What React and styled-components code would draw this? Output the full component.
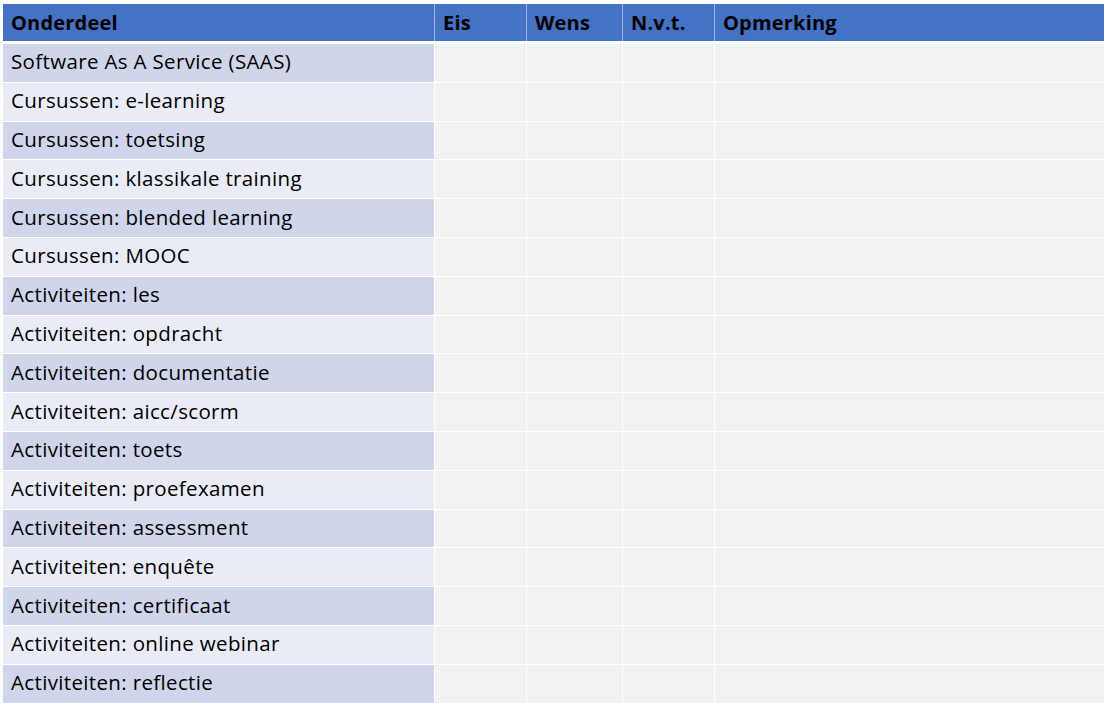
import React from 'react';
import styled, { createGlobalStyle } from 'styled-components';

const GlobalStyle = createGlobalStyle`
  html, body {
    margin: 0;
    padding: 0;
    background: #ffffff;
  }
  body {
    font-family: "Open Sans", Lato, "Liberation Sans", sans-serif;
  }
`;

const columns = '431px 91px 95px 91px 389px';

const Page = styled.div`
  padding: 4px 0 0 3px;
  width: 1108px;
  height: 713px;
  box-sizing: border-box;
`;

const Table = styled.div`
  display: flex;
  flex-direction: column;
  gap: 1px;
  width: 1101px;
  background: #ffffff;
`;

const HeaderRow = styled.div`
  display: grid;
  grid-template-columns: ${columns};
  gap: 1px;
  background: #9fb6e2;
  height: 37px;
  margin-bottom: 2px;
`;

const HeaderCell = styled.div`
  background: #4472c4;
  color: #000000;
  font-weight: 700;
  font-size: 20px;
  letter-spacing: 0.2px;
  display: flex;
  align-items: center;
  padding: 0 0 1px 8px;
`;

const Row = styled.div`
  display: grid;
  grid-template-columns: ${columns};
  gap: 1px;
  height: 37.8px;
`;

const LabelCell = styled.div`
  background: ${(p) => (p.$odd ? '#cfd5ea' : '#e9ebf5')};
  color: #000000;
  font-size: 20.5px;
  letter-spacing: 0.35px;
  display: flex;
  align-items: center;
  padding: 0 0 3px 8px;
  white-space: nowrap;
`;

const EmptyCell = styled.div`
  background: #f2f2f2;
`;

const headers = ['Onderdeel', 'Eis', 'Wens', 'N.v.t.', 'Opmerking'];

const items = [
  'Software As A Service (SAAS)',
  'Cursussen: e-learning',
  'Cursussen: toetsing',
  'Cursussen: klassikale training',
  'Cursussen: blended learning',
  'Cursussen: MOOC',
  'Activiteiten: les',
  'Activiteiten: opdracht',
  'Activiteiten: documentatie',
  'Activiteiten: aicc/scorm',
  'Activiteiten: toets',
  'Activiteiten: proefexamen',
  'Activiteiten: assessment',
  'Activiteiten: enquête',
  'Activiteiten: certificaat',
  'Activiteiten: online webinar',
  'Activiteiten: reflectie',
];

const App = () => {
  return (
    <>
      <GlobalStyle />
      <Page>
        <Table>
          <HeaderRow>
            {headers.map((h) => (
              <HeaderCell key={h}>{h}</HeaderCell>
            ))}
          </HeaderRow>
          {items.map((item, i) => (
            <Row key={item}>
              <LabelCell $odd={i % 2 === 0}>{item}</LabelCell>
              <EmptyCell />
              <EmptyCell />
              <EmptyCell />
              <EmptyCell />
            </Row>
          ))}
        </Table>
      </Page>
    </>
  );
};

export default App;
